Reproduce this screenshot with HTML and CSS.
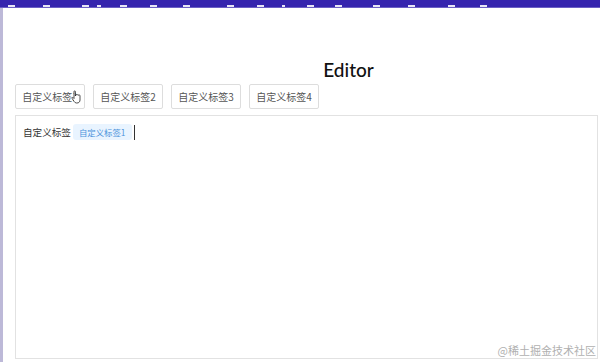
FILE: index.html
```html
<!DOCTYPE html>
<html>

<head>
	<title>Editor</title>
	<link rel="stylesheet" href="styles.css">
</head>

<body>
	<div class="topbar">
		<span class="tick" style="left:8px"></span>
		<span class="tick" style="left:43px"></span>
		<span class="tick" style="left:82px"></span>
		<span class="tick" style="left:97px;width:4px"></span>
		<span class="tick" style="left:120px"></span>
		<span class="tick" style="left:150px"></span>
		<span class="tick" style="left:183px"></span>
		<span class="tick" style="left:227px"></span>
		<span class="tick" style="left:257px"></span>
		<span class="tick" style="left:282px;width:3px"></span>
		<span class="tick" style="left:307px"></span>
		<span class="tick" style="left:335px"></span>
		<span class="tick" style="left:373px"></span>
		<span class="tick" style="left:408px"></span>
		<span class="tick" style="left:448px"></span>
		<span class="tick" style="left:480px"></span>
	</div>
	<div class="page">
		<h1 class="title">Editor</h1>
		<div class="toolbar">
			<button class="tag-btn">自定义标签1</button>
			<button class="tag-btn">自定义标签2</button>
			<button class="tag-btn">自定义标签3</button>
			<button class="tag-btn">自定义标签4</button>
		</div>
		<div class="editor">
			<div class="line">
				<span>自定义标签</span>
				<span class="chip">自定义标签1</span>
				<span class="caret"></span>
			</div>
		</div>
	</div>
	<svg class="cursor" width="12" height="14" viewBox="0 0 12 14">
		<path d="M3 1.5c0-.8 1.4-.8 1.4 0V6l.2-1c.3-.8 1.4-.6 1.4.2l.2-.2c.3-.7 1.4-.5 1.4.3.4-.6 1.4-.4 1.4.4V10c0 1.8-1.2 3-3 3H5.5C4.4 13 3.8 12.4 3.2 11.6L1.2 8.6c-.5-.8.4-1.5 1.1-.9L3 8.5z" fill="#fff" stroke="#222" stroke-width=".8"/>
	</svg>
	<div class="watermark">@稀土掘金技术社区</div>
</body>

</html>
```

FILE: styles.css
```css
body {
	margin: 0;
	padding: 0;
	background-color: #fff;
	font-family: "Noto Sans CJK SC", "Noto Sans", sans-serif;
	color: #333;
	width: 600px;
	height: 362px;
	overflow: hidden;
	position: relative;
}

.topbar {
	position: relative;
	height: 7px;
	background-color: #3524ae;
	border-bottom: 1px solid #6b5fc4;
}

.tick {
	position: absolute;
	bottom: 0;
	width: 7px;
	height: 2px;
	background-color: #e8e6f6;
}

.page {
	border-left: 3px solid #bdb9d8;
	height: 354px;
	box-sizing: border-box;
	padding: 0 2px 0 12px;
}

.title {
	margin: 0;
	padding: 49px 0 0 84px;
	height: 25px;
	text-align: center;
	font-family: Lato, "Open Sans", sans-serif;
	font-weight: 500;
	font-size: 19px;
	line-height: 25px;
	color: #111;
}

.toolbar {
	display: flex;
	gap: 8px;
	padding-top: 2px;
}

.tag-btn {
	height: 25px;
	width: 70px;
	padding: 0;
	background-color: #fff;
	border: 1px solid #ddd;
	border-radius: 2px;
	font-family: "Noto Sans CJK SC", sans-serif;
	font-size: 10px;
	color: #555;
}

.editor {
	margin-top: 6px;
	height: 244px;
	border: 1px solid #e2e2e2;
	box-sizing: border-box;
	padding: 8px 7px;
}

.line {
	display: flex;
	align-items: center;
	height: 16px;
	font-size: 9.6px;
	color: #333;
}

.chip {
	margin-left: 2px;
	padding: 0 6px;
	height: 16px;
	line-height: 16px;
	background-color: #e9f4ff;
	border-radius: 3px;
	color: #4b93db;
	font-size: 8.4px;
}

.caret {
	margin-left: 2px;
	width: 1px;
	height: 15px;
	background-color: #333;
}

.cursor {
	position: absolute;
	left: 71px;
	top: 90px;
}

.watermark {
	position: absolute;
	right: 4px;
	bottom: 4px;
	font-size: 11px;
	color: #b0b0b0;
	font-family: "Noto Sans CJK SC", serif;
}
```
